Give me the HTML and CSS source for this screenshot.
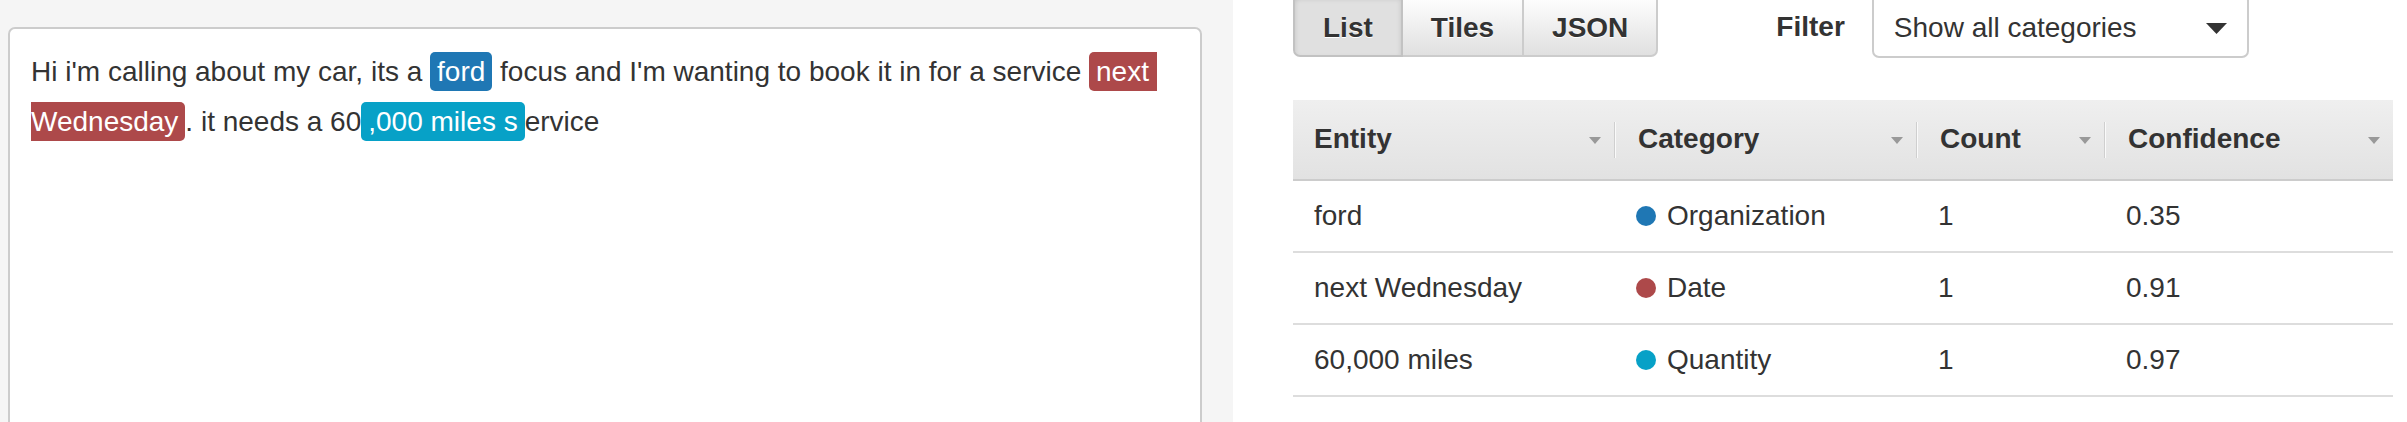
FILE: index.html
```html
<!DOCTYPE html>
<html lang="en">
<head>
<meta charset="utf-8">
<title>Entities</title>
<link rel="stylesheet" href="styles.css">
</head>
<body>
<div class="page">
  <section class="left">
    <div class="textbox">
      <p class="doc">Hi i'm calling about my car, its a <span class="ent org">ford</span> focus and I'm wanting to book it in for a service <span class="ent date">next Wednesday</span>. it needs a 60<span class="ent qty">,000 miles s</span>ervice</p>
    </div>
  </section>
  <section class="right">
    <div class="toolbar">
      <div class="btn-group">
        <button class="btn active">List</button>
        <button class="btn">Tiles</button>
        <button class="btn">JSON</button>
      </div>
      <label class="filter-label">Filter</label>
      <div class="select">
        <span>Show all categories</span>
        <svg class="caret" width="21" height="11" viewBox="0 0 21 11"><path d="M0 0H21L10.5 11Z" fill="#333"/></svg>
      </div>
    </div>
    <div class="table">
      <div class="thead">
        <div class="th"><span class="label">Entity</span><span class="sort"></span></div>
        <div class="th"><span class="divider"></span><span class="label">Category</span><span class="sort"></span></div>
        <div class="th"><span class="divider"></span><span class="label">Count</span><span class="sort"></span></div>
        <div class="th"><span class="divider"></span><span class="label">Confidence</span><span class="sort"></span></div>
      </div>
      <div class="tr">
        <div class="td">ford</div>
        <div class="td"><span class="dot org"></span>Organization</div>
        <div class="td">1</div>
        <div class="td">0.35</div>
      </div>
      <div class="tr">
        <div class="td">next Wednesday</div>
        <div class="td"><span class="dot date"></span>Date</div>
        <div class="td">1</div>
        <div class="td">0.91</div>
      </div>
      <div class="tr">
        <div class="td">60,000 miles</div>
        <div class="td"><span class="dot qty"></span>Quantity</div>
        <div class="td">1</div>
        <div class="td">0.97</div>
      </div>
    </div>
  </section>
</div>
</body>
</html>
```

FILE: styles.css
```css
html, body {
  margin: 0;
  padding: 0;
  height: 422px;
  overflow: hidden;
  background: #fff;
}
body {
  font-family: "Liberation Sans", Arial, Helvetica, sans-serif;
  font-size: 28px;
  color: #333;
}
.page {
  display: flex;
  height: 422px;
}
.left {
  width: 1233px;
  flex: none;
  background: #f5f5f5;
  box-sizing: border-box;
  padding: 27px 31px 0 8px;
}
.textbox {
  background: #fff;
  border: 2px solid #ccc;
  border-radius: 7px;
  height: 500px;
  box-sizing: border-box;
  padding: 18px 21px;
}
.doc {
  margin: 0;
  line-height: 50px;
  white-space: pre-wrap;
}
.ent {
  color: #fff;
  padding: 4px 7px 4px;
  border-radius: 5px;
}
.ent.org { background: #1f77b4; }
.ent.date { background: #ad494a; }
.ent.qty { background: #07a1c7; }

.right {
  flex: 1;
  padding: 0 14px 0 60px;
}
.toolbar {
  display: flex;
  align-items: center;
  margin-top: -6px;
  height: 63px;
}
.btn-group {
  display: flex;
  height: 63px;
}
.btn {
  font-family: inherit;
  font-size: 28px;
  font-weight: bold;
  color: #333;
  text-shadow: 0 1px 0 #fff;
  padding: 4px 28px 0;
  margin: 0;
  border: 2px solid #ccc;
  border-left-width: 0;
  background: linear-gradient(#ffffff, #e0e0e0);
  cursor: pointer;
}
.btn:first-child {
  border-left-width: 2px;
  border-radius: 7px 0 0 7px;
}
.btn:last-child {
  border-radius: 0 7px 7px 0;
}
.btn.active {
  background: #e0e0e0;
  box-shadow: inset 0 3px 5px rgba(0,0,0,0.125);
  border-color: #c2c2c2;
}
.filter-label {
  font-weight: bold;
  margin-left: 118px;
  margin-right: 27px;
  padding-top: 2px;
}
.select {
  width: 377px;
  height: 64px;
  box-sizing: border-box;
  border: 2px solid #ccc;
  border-radius: 7px;
  display: flex;
  align-items: center;
  justify-content: space-between;
  padding: 4px 20px 0 20px;
  background: #fff;
}
.caret { display: block; margin-top: 2px; }

.table {
  margin-top: 43px;
  width: 1100px;
}
.thead, .tr {
  display: grid;
  grid-template-columns: 321px 302px 188px 289px;
}
.thead {
  height: 79px;
  background: linear-gradient(#efefef, #e2e2e2);
  border-bottom: 2px solid #ccc;
}
.th {
  display: flex;
  align-items: center;
  font-weight: bold;
  padding-left: 21px;
  padding-right: 13px;
  padding-bottom: 2px;
}
.th .divider {
  width: 1px;
  height: 36px;
  background: #cfcfcf;
  border-right: 1px solid #fafafa;
  margin-left: -21px;
  margin-right: 22px;
  margin-top: 2px;
}
.th .label { flex: 1; }
.th .sort {
  width: 0;
  height: 0;
  border-left: 6px solid transparent;
  border-right: 6px solid transparent;
  border-top: 7px solid #999;
  margin-top: 4px;
}
.tr {
  height: 70px;
  border-bottom: 2px solid #ddd;
}
.td {
  display: flex;
  align-items: center;
  padding-left: 22px;
}
.td:first-child { padding-left: 21px; }
.dot {
  width: 20px;
  height: 20px;
  border-radius: 50%;
  margin-right: 11px;
  flex: none;
}
.dot.org { background: #1f77b4; }
.dot.date { background: #ad494a; }
.dot.qty { background: #07a1c7; }
```
